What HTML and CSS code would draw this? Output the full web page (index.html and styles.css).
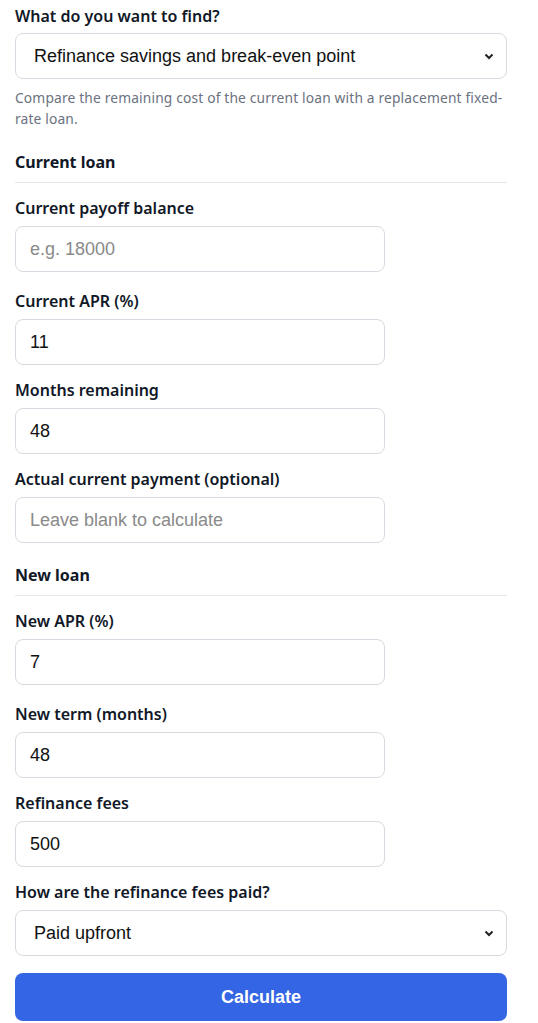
FILE: index.html
```html
<!DOCTYPE html>
<html lang="en">
<head>
    <meta charset="UTF-8">
    <meta name="viewport" content="width=device-width, initial-scale=1.0">
    <title>Refinance Calculator</title>
    <link rel="stylesheet" href="styles.css">
</head>
<body>
    <form class="calc-form">
        <div class="field field-top">
            <label for="mode">What do you want to find?</label>
            <select id="mode" class="wide">
                <option>Refinance savings and break-even point</option>
            </select>
            <p class="hint">Compare the remaining cost of the current loan with a replacement fixed-rate loan.</p>
        </div>

        <h3 class="section-title">Current loan</h3>

        <div class="field first">
            <label for="balance">Current payoff balance</label>
            <input id="balance" type="text" placeholder="e.g. 18000">
        </div>
        <div class="field">
            <label for="apr">Current APR (%)</label>
            <input id="apr" type="text" value="11">
        </div>
        <div class="field">
            <label for="months">Months remaining</label>
            <input id="months" type="text" value="48">
        </div>
        <div class="field">
            <label for="payment">Actual current payment (optional)</label>
            <input id="payment" type="text" placeholder="Leave blank to calculate">
        </div>

        <h3 class="section-title second">New loan</h3>

        <div class="field first">
            <label for="new-apr">New APR (%)</label>
            <input id="new-apr" type="text" value="7">
        </div>
        <div class="field">
            <label for="new-term">New term (months)</label>
            <input id="new-term" type="text" value="48">
        </div>
        <div class="field">
            <label for="fees">Refinance fees</label>
            <input id="fees" type="text" value="500">
        </div>
        <div class="field">
            <label for="fee-mode">How are the refinance fees paid?</label>
            <select id="fee-mode" class="wide">
                <option>Paid upfront</option>
                <option>Added to the loan</option>
            </select>
        </div>

        <button type="button" class="calc-button">Calculate</button>
    </form>
</body>
</html>
```

FILE: styles.css
```css
* {
    margin: 0;
    padding: 0;
    box-sizing: border-box;
}

body {
    font-family: "Noto Sans", "Open Sans", sans-serif;
    background-color: #fff;
    color: #111827;
    padding: 4px 15px 0;
}

.calc-form {
    width: 492px;
}

.field {
    margin-bottom: 13px;
}

.field.first {
    margin-bottom: 17px;
}

.field label {
    display: block;
    font-size: 16px;
    font-weight: 600;
    line-height: 24px;
    margin-bottom: 6px;
}

.field input,
.field select {
    display: block;
    width: 370px;
    height: 46px;
    padding: 0 14px;
    border: 1px solid #d7dae0;
    border-radius: 8px;
    background-color: #fff;
    font-family: "Liberation Sans", Arial, sans-serif;
    font-size: 18px;
    color: #111;
}

.field input::placeholder {
    color: #8a8a8a;
}

.field select.wide {
    width: 492px;
    padding: 0 30px 0 18px;
    appearance: none;
    -webkit-appearance: none;
    background-image: url("data:image/svg+xml,%3Csvg xmlns='http://www.w3.org/2000/svg' width='10' height='7' viewBox='0 0 10 7'%3E%3Cpath d='M1.5 1.5l3.5 3.5 3.5-3.5' fill='none' stroke='%23222' stroke-width='2'/%3E%3C/svg%3E");
    background-repeat: no-repeat;
    background-position: right 12px center;
}

.field-top label {
    margin-bottom: 5px;
}

.hint {
    margin-top: 8px;
    font-size: 13.8px;
    letter-spacing: 0.15px;
    line-height: 21px;
    color: #6b7280;
}

.field-top {
    margin-bottom: 22px;
}

.section-title {
    font-size: 16px;
    font-weight: 700;
    line-height: 22px;
    padding-bottom: 9px;
    border-bottom: 1px solid #e5e7eb;
    margin-bottom: 13px;
}

.section-title.second {
    margin-top: 21px;
}

.calc-button {
    display: block;
    width: 492px;
    height: 48px;
    margin-top: 17px;
    border: none;
    border-radius: 8px;
    background-color: #3465e4;
    color: #fff;
    font-family: "Liberation Sans", Arial, sans-serif;
    font-size: 18px;
    font-weight: 700;
    cursor: pointer;
}
```
